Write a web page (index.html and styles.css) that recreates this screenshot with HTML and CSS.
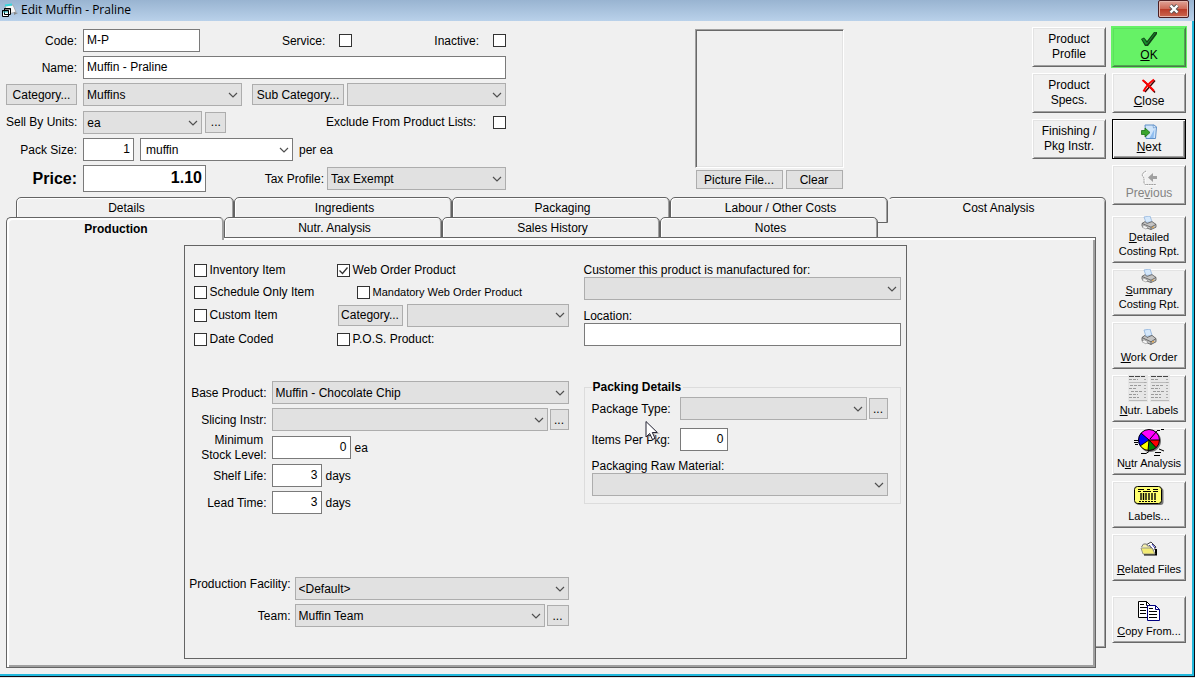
FILE: index.html
```html
<!DOCTYPE html>
<html lang="en">
<head>
<meta charset="utf-8">
<title>Edit Muffin - Praline</title>
<link rel="stylesheet" href="styles.css">
</head>
<body>
<svg class="sprite" aria-hidden="true">
  <symbol id="printer" viewBox="0 0 16 15" preserveAspectRatio="none">
    <path d="M3 1l6-1 2 6-6 1z" fill="#d5e8fb" stroke="#8fb2dc" stroke-width=".8"/>
    <path d="M1 8l3-2 2 2 5-2 4 3v3l-5 2.500L1 11z" fill="#c4c4c4" stroke="#666" stroke-width=".9"/>
    <path d="M1 8l9 4 5-3M10 12v2.500" fill="none" stroke="#555" stroke-width=".8"/>
    <path d="M3 10l4 2-2 2-4-2z" fill="#f4f4f4" stroke="#888" stroke-width=".6"/>
    <path d="M11 12.500l2-1" stroke="#e8a33a"/>
  </symbol>
</svg>
<div class="window">
  <header class="titlebar">
    <svg width="17" height="16" viewBox="0 0 17 16" aria-hidden="true">
      <path d="M4 3l8-1 3 7-8 2z" fill="#f6f6f6" stroke="#999" stroke-width=".7"/>
      <path d="M4 2.500l7-1" stroke="#39d7dc" stroke-width="2"/>
      <path d="M13 9l4 1-4 2z" fill="#888"/>
      <path d="M3.500 5.500h6v6h-6zM1.500 7.500h6v6h-6z" fill="#fff" stroke="#000"/>
      <path d="M1 8h7M3 6h7" stroke="#000"/>
      <path d="M2 9h5" stroke="#39d7dc"/>
    </svg>
    <h1>Edit Muffin - Praline</h1>
    <button class="window-close" type="button" aria-label="Close window">
      <svg width="12" height="10" viewBox="0 0 12 10"><path d="M2.500 1.500l7 7m0-7l-7 7" stroke="#555" stroke-width="4"/><path d="M2.500 1.500l7 7m0-7l-7 7" stroke="#fff" stroke-width="2.400"/></svg>
    </button>
  </header>

  <div class="body">
    <main class="main">
      <section class="top">
        <form class="form">
          <div class="row">
            <label class="lead" for="code">Code:</label>
            <input class="code" id="code" type="text" value="M-P">
            <span class="flags">
              <span class="flag"><label for="service">Service:</label><input id="service" type="checkbox"></span>
              <span class="flag"><label for="inactive">Inactive:</label><input id="inactive" type="checkbox"></span>
            </span>
          </div>
          <div class="row">
            <label class="lead" for="name">Name:</label>
            <input class="grow" id="name" type="text" value="Muffin - Praline">
          </div>
          <div class="row">
            <button class="btn lead-btn" type="button">Category...</button>
            <select class="grow" aria-label="Category"><option>Muffins</option></select>
            <button class="btn sub-btn" type="button">Sub Category...</button>
            <select class="grow tight" aria-label="Sub category"><option></option></select>
          </div>
          <div class="row units-row">
            <label class="lead" for="units">Sell By Units:</label>
            <select class="units" id="units"><option>ea</option></select>
            <button class="btn more tight" type="button" aria-label="More units">...</button>
            <span class="flag push exclude"><label for="exclude">Exclude From Product Lists:</label><input id="exclude" type="checkbox"></span>
          </div>
          <div class="row">
            <label class="lead" for="pack">Pack Size:</label>
            <input class="num pack" id="pack" type="text" value="1">
            <select class="combo" aria-label="Pack unit"><option>muffin</option></select>
            <span>per ea</span>
          </div>
          <div class="row price-row">
            <label class="lead price-label" for="price">Price:</label>
            <input class="num price" id="price" type="text" value="1.10">
            <label class="push" for="tax">Tax Profile:</label>
            <select class="tax tight" id="tax"><option>Tax Exempt</option></select>
          </div>
        </form>

        <div class="picture">
          <div class="frame"></div>
          <div class="picture-actions">
            <button class="btn picture-file" type="button">Picture File...</button>
            <button class="btn clear" type="button">Clear</button>
          </div>
        </div>

        <div class="profile">
          <button class="tool plain" type="button">Product<br>Profile</button>
          <button class="tool plain" type="button">Product<br>Specs.</button>
          <button class="tool plain" type="button">Finishing /<br>Pkg Instr.</button>
        </div>
      </section>

      <section class="tabset">
        <div class="tabs back">
          <button class="tab" type="button">Details</button>
          <button class="tab" type="button">Ingredients</button>
          <button class="tab" type="button">Packaging</button>
          <button class="tab" type="button">Labour / Other Costs</button>
          <button class="tab open" type="button">Cost Analysis</button>
        </div>
        <div class="back-panel"></div>
        <div class="tabs front">
          <button class="tab selected" type="button">Production</button>
          <button class="tab" type="button">Nutr. Analysis</button>
          <button class="tab" type="button">Sales History</button>
          <button class="tab" type="button">Notes</button>
        </div>
        <div class="panel">
          <div class="sheet">
            <div class="options">
              <label class="check"><input type="checkbox">Inventory Item</label>
              <label class="check"><input type="checkbox" checked>Web Order Product</label>
              <label class="check"><input type="checkbox">Schedule Only Item</label>
              <label class="check small"><input type="checkbox">Mandatory Web Order Product</label>
              <label class="check"><input type="checkbox">Custom Item</label>
              <span class="web-category"><button class="btn" type="button">Category...</button><select class="grow" aria-label="Web category"><option></option></select></span>
              <label class="check"><input type="checkbox">Date Coded</label>
              <label class="check"><input type="checkbox">P.O.S. Product:</label>
            </div>

            <div class="stack">
              <label for="customer">Customer this product is manufactured for:</label>
              <select id="customer"><option></option></select>
              <label for="location">Location:</label>
              <input id="location" type="text">
            </div>

            <div class="recipe">
              <label for="base">Base Product:</label>
              <span class="cell"><select class="grow" id="base"><option>Muffin - Chocolate Chip</option></select></span>
              <label for="slicing">Slicing Instr:</label>
              <span class="cell"><select class="grow" id="slicing"><option></option></select><button class="btn more-small" type="button" aria-label="More slicing">...</button></span>
              <label class="two-line" for="stock">Minimum&nbsp;<br>Stock Level:</label>
              <span class="cell"><input class="num stock" id="stock" type="text" value="0"><span class="unit">ea</span></span>
              <label for="shelf">Shelf Life:</label>
              <span class="cell"><input class="num days" id="shelf" type="text" value="3"><span class="unit">days</span></span>
              <label for="leadtime">Lead Time:</label>
              <span class="cell"><input class="num days" id="leadtime" type="text" value="3"><span class="unit">days</span></span>
            </div>

            <fieldset class="packing">
              <legend>Packing Details</legend>
              <div class="pack-row">
                <label for="ptype">Package Type:</label>
                <select class="grow" id="ptype"><option></option></select>
                <button class="btn more-small" type="button" aria-label="More package types">...</button>
              </div>
              <div class="pack-row items-row">
                <label for="items">Items Per Pkg:</label>
                <input class="num items" id="items" type="text" value="0">
                <svg class="cursor" width="16" height="22" viewBox="0 0 16 22" aria-hidden="true"><path d="M3 3v15l4-4 3 6 3-1-3-6h5z" fill="#999" opacity=".5"/><path d="M1 .500v15.500l3.700-3.500 2.800 6 2.500-1.200-2.700-5.800h5z" fill="#fff" stroke="#223"/></svg>
              </div>
              <label class="raw-label" for="raw">Packaging Raw Material:</label>
              <select class="raw" id="raw"><option></option></select>
            </fieldset>

            <div class="facility">
              <label class="raised" for="fac">Production Facility:</label>
              <span class="cell"><select class="grow" id="fac"><option>&lt;Default&gt;</option></select></span>
              <label for="team">Team:</label>
              <span class="cell"><select class="grow" id="team"><option>Muffin Team</option></select><button class="btn more-team" type="button" aria-label="More teams">...</button></span>
            </div>
          </div>
        </div>
      </section>
    </main>

    <aside class="side">
      <div class="group primary">
        <button class="tool ok" type="button">
          <svg width="18" height="17" viewBox="0 0 18 17"><path d="M1 8l3-1.500L7 10l7-9h3v2L8 15H5z" fill="#143d18"/><path d="M2 8l2-.500L7 12l8-10.500h1L7 13.500H5.500z" fill="#15922c"/></svg>
          <span><u>O</u>K</span></button>
        <button class="tool" type="button">
          <svg width="16" height="16" viewBox="0 0 16 16"><path d="M3 3l11 11.500M14 2.500L4 14" stroke="#400" stroke-width="1.500"/><path d="M1.500 2c4 3 8 7 11.500 11M13 1.500C9 4.500 5 8 2.500 13.500" fill="none" stroke="#f00" stroke-width="2"/></svg>
          <span><u>C</u>lose</span></button>
        <button class="tool default" type="button">
          <svg width="16" height="16" viewBox="0 0 16 16"><path d="M4 1h9l2.500 2-1 11.500H5z" fill="#cfe4fa" stroke="#5f90c8"/><path d="M12 1l3.500 2-3 1z" fill="#fff" stroke="#5f90c8" stroke-width=".7"/><path d="M13.500 5l-1 9h-4z" fill="#8fbdf0"/><path d="M.500 6.500H4V4l5 4.500L4 13v-2.500H.500z" fill="#3aa52d" stroke="#1c6e17" stroke-width=".8"/></svg>
          <span><u>N</u>ext</span></button>
        <button class="tool disabled" type="button" disabled>
          <svg width="16" height="16" viewBox="0 0 16 16"><path d="M5 1L2.500 2.500 1 5l2 3v5l2 2h10" fill="none" stroke="#fff" transform="translate(1 1)"/><path d="M5 1L2.500 2.500 1 5l2 3v5l1 1.500h11" fill="none" stroke="#a0a0a0" stroke-dasharray="2 .5"/><path d="M7 7.500l5-4.500v3h4v3h-4v3z" fill="#a0a0a0"/></svg>
          <span>Pre<u>v</u>ious</span></button>
      </div>
      <div class="group reports">
        <button class="tool" type="button"><svg width="16" height="14"><use href="#printer"/></svg><span><u>D</u>etailed<br>Costing Rpt.</span></button>
        <button class="tool" type="button"><svg width="16" height="14"><use href="#printer"/></svg><span><u>S</u>ummary<br>Costing Rpt.</span></button>
        <button class="tool" type="button"><svg class="centred" width="16" height="16"><use href="#printer"/></svg><span><u>W</u>ork Order</span></button>
        <button class="tool" type="button">
          <svg width="44" height="28" viewBox="0 0 44 28"><path d="M1 0h20v27H1zM23 0h20v27H23z" fill="#e6e6e6"/><path d="M2 1.500h16M24 1.500h17" stroke="#444" stroke-dasharray="5 1"/><path d="M2 4.500h9M24 4.500h8M3 10.500h11M25 10.500h12M2 13.500h8M24 13.500h9M4 16.500h12M26 16.500h11M2 19.500h9M24 19.500h10M2 22.500h10M24 22.500h10" stroke="#999" stroke-dasharray="3 1"/><path d="M2 7.500h18M24 7.500h18M2 25.500h18M24 25.500h18" stroke="#bbb"/><path d="M18 4v21M40 4v21" stroke="#aaa" stroke-width="2" stroke-dasharray="1 2"/></svg>
          <span><u>N</u>utr. Labels</span></button>
        <button class="tool" type="button">
          <svg width="32" height="28" viewBox="0 0 32 28"><circle cx="17" cy="13" r="11" fill="#777"/><circle cx="16" cy="12" r="10.500" fill="#f0f"/><path d="M16 12L8 5a10.500 10.500 0 0 0-1 13z" fill="#00f"/><path d="M16 12l-9 6a10.500 10.500 0 0 0 8 4.500z" fill="#ff0"/><path d="M16 12l-1 10.500a10.500 10.500 0 0 0 8-3z" fill="#008000"/><path d="M16 12l7 7.500a10.500 10.500 0 0 0 3.500-7.500z" fill="#f00"/><path d="M8 5l8 7h10.500M16 12l-9 6M16 12l-1 10.500M16 12l7 7.500M17 11l7-8" fill="none" stroke="#000"/><circle cx="16" cy="12" r="10.500" fill="none" stroke="#000"/><path d="M24 2.500h3M28 1.500h3M1 12.500h4M1 14.500h4M2 16.500h3M8 25.500h5l3-2M22 24.500h6M21 27.500h6M26 21l5 2" fill="none" stroke="#000"/></svg>
          <span>N<u>u</u>tr Analysis</span></button>
        <button class="tool" type="button">
          <svg class="centred" width="30" height="20" viewBox="0 0 30 20"><rect x="2" y="2" width="27.500" height="17" rx="3" fill="#777"/><rect x=".500" y=".500" width="27" height="17" rx="3" fill="#ffff70" stroke="#000"/><path d="M4 3.500h6m3 0h3m3 0h5M4 5.500h3m2 0h8m2 0h5" stroke="#000"/><path d="M7 7v7M9.500 7v7M12 7v7M15 7v7M18 7v7M21 7v7" stroke="#000" stroke-width="1.400"/><path d="M5 15.500h18" stroke="#000" stroke-dasharray="2 1"/></svg>
          <span>Labels...</span></button>
        <button class="tool" type="button">
          <svg class="centred" width="18" height="16" viewBox="0 0 18 16"><path d="M4 13.500h12V8" fill="none" stroke="#000" stroke-width="2"/><path d="M6 4l5-3 5 5-3 4z" fill="#fff" stroke="#444"/><path d="M9 4l4 4m-1-5l3 4" stroke="#22a" /><path d="M1.500 6l2-3h3l1 2h3v3" fill="#f4efad" stroke="#777"/><path d="M1 7h11l3 6H3z" fill="#f3eb73" stroke="#998"/></svg>
          <span><u>R</u>elated Files</span></button>
        <button class="tool copy" type="button">
          <svg class="centred" width="24" height="22" viewBox="0 0 24 22"><path d="M1.500 1.500h8l4 4v12h-12z" fill="#fff" stroke="#000"/><path d="M9.500 1.500v4h4M3 4.500h4M3 7.500h7M3 10.500h6M3 13.500h6" fill="none" stroke="#000"/><path d="M10.500 5.500h8l4 4v11h-12z" fill="#fff" stroke="#000080"/><path d="M18.500 5.500v4h4" fill="none" stroke="#000080"/><path d="M12 8.500h4M12 11.500h8M12 14.500h8M12 17.500h8" stroke="#000"/></svg>
          <span><u>C</u>opy From...</span></button>
      </div>
    </aside>
  </div>
</div>
</body>
</html>
```

FILE: styles.css
```css
* { box-sizing: border-box; }

:root {
  --face: #f0f0f0;
  --line: #646464;
  --shade: #a0a0a0;
}

body {
  margin: 0;
  background: #e6e6e6;
  color: #000;
  font: 12px/14px "Liberation Sans", Arial, sans-serif;
}

.sprite { display: none; }

.window {
  display: flex;
  flex-direction: column;
  min-height: calc(100vh - 1px);
  background: var(--face);
  border-right: 1px solid #0a0a14;
  border-bottom: 1px solid #0a0a14;
  box-shadow: inset -2px -2px 0 #22b8dc;
}

.titlebar {
  display: flex;
  align-items: center;
  gap: 3px;
  height: 21px;
  padding: 0 5px 0 1px;
  background: linear-gradient(#99b4d1, #b9d1ea);
}

.titlebar h1 {
  flex: 1;
  margin: 0;
  padding-bottom: 2px;
  font: 12px/16px "Open Sans", "Noto Sans", sans-serif;
}

.window-close {
  display: grid;
  place-items: center;
  align-self: flex-start;
  width: 31px;
  height: 18px;
  padding: 0;
  border: 1px solid #4b1e22;
  border-radius: 2px;
  background: linear-gradient(#e0a397, #cf6a58 48%, #b93a27 50%, #cb6850);
  box-shadow: inset 0 0 0 1px #e5b5ab;
}

.body {
  flex: 1;
  display: flex;
  gap: 6px;
  padding: 0 8px 8px 6px;
}

.main {
  flex: 1;
  display: flex;
  flex-direction: column;
  gap: 5px;
  min-width: 0;
}

.top {
  display: flex;
  justify-content: space-between;
  align-items: flex-start;
  padding-top: 6px;
}

/* Controls */
button, input, select { font: inherit; color: inherit; margin: 0; }

input[type="text"], select {
  height: 23px;
  min-width: 0;
  border: 1px solid #7a7a7a;
  border-radius: 0;
  background-color: #fff;
}

input[type="text"] { padding: 0 3px 2px; }

select {
  appearance: none;
  padding: 0 20px 0 3px;
  border-color: #adadad;
  background: #e1e1e1 url("data:image/svg+xml,%3Csvg xmlns='http://www.w3.org/2000/svg' width='10' height='6'%3E%3Cpath d='M1 1l4 4 4-4' fill='none' stroke='%23505050' stroke-width='1.200'/%3E%3C/svg%3E") no-repeat right 3px center;
}

input[type="checkbox"] {
  appearance: none;
  flex: none;
  width: 13px;
  height: 13px;
  border: 1px solid #333;
  background: #fff;
}

input[type="checkbox"]:checked {
  background: #fff url("data:image/svg+xml,%3Csvg xmlns='http://www.w3.org/2000/svg' width='11' height='11'%3E%3Cpath d='M1.500 5.500l3 3 5-6' fill='none' stroke='%23333' stroke-width='1.300'/%3E%3C/svg%3E") center no-repeat;
}

.btn {
  flex: none;
  height: 21px;
  padding: 0;
  border: 1px solid #adadad;
  background: #e1e1e1;
}

input.num { text-align: right; }
.grow { flex: 1; }
.push { margin-left: auto; }

/* Product form */
.form {
  flex: 0 1 500px;
  display: flex;
  flex-direction: column;
  gap: 4px;
  padding-top: 2px;
}

.row {
  display: flex;
  align-items: center;
  gap: 6px;
  min-height: 23px;
}

.units-row { min-height: 24px; align-items: flex-end; }
.units-row .lead, .units-row .exclude { line-height: 23px; }
.units-row .btn { align-self: center; }
.row .tight { margin-left: -3px; }
.lead { flex: 0 0 71px; text-align: right; white-space: nowrap; }
.lead-btn { width: 71px; }
.sub-btn { width: 92px; margin-left: 4px; }
.code { width: 117px; }
.units { width: 119px; }
.more { width: 21px; }
.pack { width: 51px; }
.combo { width: 153px; border-color: #7a7a7a; background-color: #fff; padding-left: 5px; }
.price { width: 123px; }
.form .price { height: 27px; font-size: 16px; font-weight: bold; }
.price-label { font-size: 16px; font-weight: bold; }
.tax { width: 179px; }
.flags { display: flex; gap: 82px; margin-left: auto; }
.flag { display: flex; align-items: center; gap: 14px; }
.exclude { gap: 17px; }

/* Picture */
.picture { padding-top: 2px; }

.frame {
  height: 139px;
  border: 1px solid;
  border-color: #a0a0a0 #fff #fff #a0a0a0;
  box-shadow: inset 1px 1px 0 #696969, inset -1px -1px 0 #e3e3e3;
}

.picture-actions { display: flex; gap: 3px; padding: 2px 1px 0; }
.picture-actions .btn { height: 19px; }
.picture-file { width: 87px; }
.clear { width: 57px; }

/* Raised buttons */
.profile, .group { display: flex; flex-direction: column; gap: 6px; }

.tool {
  display: flex;
  flex-direction: column;
  align-items: center;
  justify-content: flex-end;
  width: 74px;
  height: 40px;
  padding: 0 0 4px;
  border: 1px solid;
  border-color: #fff #696969 #696969 #fff;
  background: var(--face);
  box-shadow: inset 1px 1px 0 #e3e3e3, inset -1px -1px 0 #a0a0a0;
}

.tool svg { flex: none; }
.plain { justify-content: center; padding: 0; line-height: 15px; }

.side { padding-top: 6px; }
.ok { background: #66f266; border-color: #66f266 #4a7a4a #4a7a4a #66f266; outline: 1px solid #66f266; box-shadow: inset 1px 1px 0 #5de05d, inset -1px -1px 0 #4fa64f; }
.default { outline: 1px solid #000; outline-offset: -1px; box-shadow: inset 1px 1px 0 #fff, inset -1px -1px 0 #696969, inset -2px -2px 0 #a0a0a0; }
.disabled { color: #838383; }
.reports { margin-top: 11px; }
.reports .tool { height: 47px; font-size: 11px; }
.reports .centred { margin: auto; }
.reports .copy { margin-top: 9px; }

/* Tabs */
.tabset {
  flex: 1;
  display: grid;
  grid-template-columns: 10px 1fr 10px;
  grid-template-rows: 20px 20px 1fr 20px;
}

.tabs { display: grid; grid-template-columns: repeat(5, 1fr); z-index: 1; }
.back { grid-area: 1 / 2 / 2 / 4; height: 26px; }
.front { grid-area: 2 / 1 / 3 / 3; z-index: 2; pointer-events: none; }
.front .tab { pointer-events: auto; height: 21px; }

.tab {
  height: 26px;
  padding: 3px 0 0 3px;
  display: flex;
  justify-content: center;
  border: 1px solid var(--line);
  border-radius: 5px 5px 0 0;
  background: var(--face);
  box-shadow: inset 1px 1px 0 #fff, inset -1px 0 0 var(--shade);
}

.tab.open { height: 41px; border-bottom: 0; border-left-color: transparent; box-shadow: inset 0 1px 0 #fff, inset -1px 0 0 var(--shade); }

.front .selected {
  height: 23px;
  padding-top: 4px;
  border-bottom: 0;
  border-right: 2px solid var(--shade);
  font-weight: bold;
  box-shadow: inset 2px 2px 0 #fff;
}

.back-panel {
  grid-area: 2 / 2 / 4 / 4;
  border: solid var(--line);
  border-width: 0 1px 1px 0;
  box-shadow: inset -1px -1px 0 var(--shade);
}

.panel {
  grid-area: 3 / 1 / 5 / 3;
  z-index: 1;
  display: flex;
  justify-content: center;
  padding: 7px 14px 8px 2px;
  background: var(--face);
  border: 1px solid var(--line);
  box-shadow: inset 2px 2px 0 #fff, inset -2px -2px 0 var(--shade);
}

/* Production sheet */
.sheet {
  flex: 0 1 723px;
  display: grid;
  grid-template-columns: 380fr 317fr;
  grid-template-rows: auto auto 1fr;
  column-gap: 15px;
  align-content: start;
  padding: 13px 5px 31px 4px;
  border: 1px solid var(--line);
}

.options {
  display: grid;
  grid-template-columns: 143px 1fr;
  grid-template-rows: 22px 22px 24px 24px;
  align-items: center;
  padding-left: 5px;
}

.check { display: flex; align-items: center; gap: 3px; }
.small { font-size: 11px; padding-left: 20px; }
.web-category { display: flex; align-items: center; gap: 4px; padding-left: 1px; }
.web-category .btn { width: 65px; }

.stack { display: flex; flex-direction: column; padding-top: 4px; }
.stack > :nth-child(2) { margin-bottom: 9px; }

.recipe {
  display: grid;
  grid-template-columns: 78px 1fr;
  grid-template-rows: 23px 23px 25px 23px 23px;
  gap: 4px 5px;
  align-items: center;
  margin-top: 30px;
}

.recipe label, .facility label { text-align: right; white-space: nowrap; }
.recipe .two-line { line-height: 15px; }
.cell { display: flex; align-items: center; gap: 2px; }
.more-small { width: 19px; }
.more-team { width: 22px; }
.stock { width: 79px; }
.days { width: 50px; }
.unit { padding-left: 2px; }

.packing {
  display: flex;
  flex-direction: column;
  align-self: start;
  min-width: 0;
  margin: 29px 0 0;
  padding: 3px 12px 7px 7px;
  border: 1px solid #dcdcdc;
}

.packing legend { margin-left: 0; padding: 0 2px 0 1px; font-weight: bold; }
.pack-row { position: relative; display: flex; align-items: center; gap: 2px; }
.pack-row label { flex: 0 0 86px; }
.items-row { margin-top: 8px; }
.items { width: 48px; }
.raw-label { margin-top: 8px; }
.cursor { position: absolute; left: 53px; top: -7px; }

.facility {
  grid-column: 1;
  align-self: end;
  display: grid;
  grid-template-columns: 102px 1fr;
  gap: 4px;
  align-items: center;
}

.raised { align-self: start; }
```
